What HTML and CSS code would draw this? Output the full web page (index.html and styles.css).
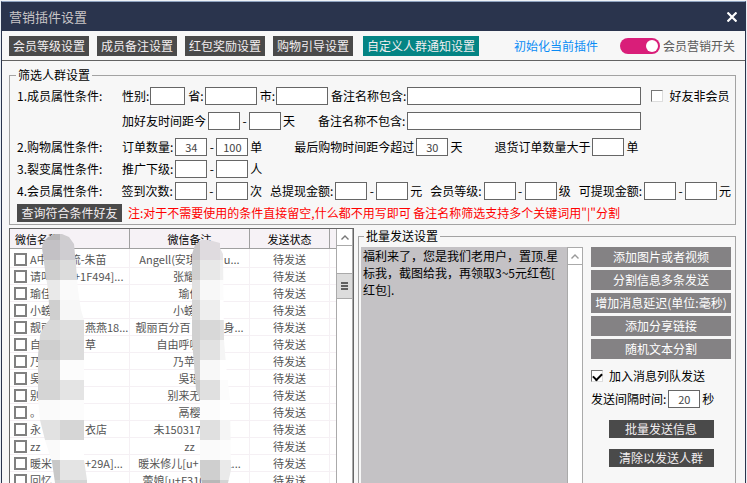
FILE: index.html
```html
<!DOCTYPE html>
<html lang="zh-CN">
<head>
  <meta charset="UTF-8" />
  <meta name="viewport" content="width=device-width, initial-scale=1.0" />
  <title>营销插件设置</title>
  <link rel="stylesheet" href="styles.css">
</head>
<body>
  <div class="window">
    <header class="titlebar">
      <h1>营销插件设置</h1>
      <button class="close" aria-label="关闭">
        <svg width="10" height="10" viewBox="0 0 10 10"><path d="M0.5 0.5L9.5 9.5M9.5 0.5L0.5 9.5" stroke="#fff" stroke-width="2.2"/></svg>
      </button>
    </header>

    <nav class="toolbar">
      <button class="btn tab">会员等级设置</button>
      <button class="btn tab">成员备注设置</button>
      <button class="btn tab">红包奖励设置</button>
      <button class="btn tab">购物引导设置</button>
      <button class="btn tab active">自定义人群通知设置</button>
      <a class="init" href="#">初始化当前插件</a>
      <label class="switch"><input type="checkbox" checked>会员营销开关</label>
    </nav>

    <main>
      <fieldset class="filter">
        <legend>筛选人群设置</legend>
        <div class="member">
          <div class="row tight">
            <span class="row-title">1.成员属性条件:</span>
            <label class="field">性别:<input class="w-s" type="text"></label>
            <label class="field">省:<input class="w-m" type="text"></label>
            <label class="field">市:<input class="w-m" type="text"></label>
            <label class="field">备注名称包含:<input class="w-l" type="text"></label>
            <label class="check"><input type="checkbox">好友非会员</label>
          </div>
          <div class="row wide">
            <span class="row-title"></span>
            <label class="field">加好友时间距今<input type="text"><i>-</i><input type="text" aria-label="天数上限">天</label>
            <label class="field">备注名称不包含:<input class="w-l" type="text"></label>
          </div>
        </div>
        <div class="row wider">
          <span class="row-title">2.购物属性条件:</span>
          <label class="field">订单数量:<input type="text" value="34"><i>-</i><input type="text" value="100" aria-label="订单数量上限">单</label>
          <label class="field">最后购物时间距今超过<input type="text" value="30">天</label>
          <label class="field">退货订单数量大于<input type="text">单</label>
        </div>
        <div class="row">
          <span class="row-title">3.裂变属性条件:</span>
          <label class="field">推广下级:<input type="text"><i>-</i><input type="text" aria-label="下级上限">人</label>
        </div>
        <div class="row">
          <span class="row-title">4.会员属性条件:</span>
          <label class="field">签到次数:<input type="text"><i>-</i><input type="text" aria-label="签到上限">次</label>
          <label class="field">总提现金额:<input type="text"><i>-</i><input type="text" aria-label="总提现上限">元</label>
          <label class="field">会员等级:<input type="text"><i>-</i><input type="text" aria-label="等级上限">级</label>
          <label class="field">可提现金额:<input type="text"><i>-</i><input type="text" aria-label="可提现上限">元</label>
        </div>
        <div class="row">
          <button class="btn small">查询符合条件好友</button>
          <span class="tip">注:对于不需要使用的条件直接留空,什么都不用写即可 备注名称筛选支持多个关键词用"|"分割</span>
        </div>
      </fieldset>

      <div class="panels">
        <section class="list">
          <div class="list-body">
            <table>
              <colgroup><col class="c-name"><col class="c-note"><col class="c-state"><col></colgroup>
              <thead>
                <tr><th>微信名称</th><th>微信备注</th><th>发送状态</th><th></th></tr>
              </thead>
              <tbody id="friends"></tbody>
            </table>
            <svg class="smear first" width="50" height="251" viewBox="38 232 50 251" shape-rendering="crispEdges">
              <clipPath id="a"><path d="M42 248L43 242L48 237L55 234L62 234L69 237L74 244L76 265L78 290L81 310L84 320L84 460L87 480V483H55L52 462L45 440L40 420L38 400V355L40 335L44 326L50 319L48 290L45 270Z"/></clipPath>
              <g id="smear1" clip-path="url(#a)"></g>
            </svg>
            <svg class="smear second" width="42" height="245" viewBox="191 238 42 245" shape-rendering="crispEdges">
              <clipPath id="b"><path d="M192 254L195 245L201 240H209L220 243V248L223 254L224 340L226 365L230 400L231 470L228 483H202L200 475V400L196 390L192 340Z"/></clipPath>
              <g id="smear2" clip-path="url(#b)"></g>
            </svg>
          </div>
          <div class="scroll">
            <button aria-label="向上"><svg width="8" height="5" viewBox="0 0 8 5"><path d="M0.5 4.5L4 1L7.5 4.5" fill="none" stroke="#777" stroke-width="1.4"/></svg></button>
            <span class="thumb"><svg width="7" height="8" viewBox="0 0 7 8"><path d="M0 1H7M0 4H7M0 7H7" stroke="#606060" stroke-width="2"/></svg></span>
          </div>
        </section>

        <fieldset class="send">
          <legend>批量发送设置</legend>
          <div class="message">
            <textarea aria-label="发送内容">福利来了，您是我们老用户，置顶.星
标我，截图给我，再领取3~5元红苞[
红包].</textarea>
            <div class="scroll">
              <button aria-label="向上"><svg width="8" height="5" viewBox="0 0 8 5"><path d="M0.5 4.5L4 1L7.5 4.5" fill="none" stroke="#999" stroke-width="1.4"/></svg></button>
            </div>
          </div>
          <div class="actions">
            <button class="btn gray">添加图片或者视频</button>
            <button class="btn gray">分割信息多条发送</button>
            <button class="btn gray">增加消息延迟(单位:毫秒)</button>
            <button class="btn gray">添加分享链接</button>
            <button class="btn gray">随机文本分割</button>
            <label class="check queue"><input type="checkbox" checked>加入消息列队发送</label>
            <label class="field delay">发送间隔时间:<input type="text" value="20">秒</label>
            <button class="btn small">批量发送信息</button>
            <button class="btn small">清除以发送人群</button>
          </div>
        </fieldset>
      </div>
    </main>
  </div>
  <script src="script.js"></script>
</body>
</html>
```
FILE: styles.css
```css
* {
  box-sizing: border-box;
}
body {
  margin: 0;
  height: 100vh;
  display: flex;
  padding: 0 1px;
  border-top: 1px solid #eef2f6;
  background: #e9eff5;
  overflow: hidden;
  font-family: "Noto Sans CJK SC", sans-serif;
  font-size: 12px;
  line-height: 18px;
  color: #000;
}
button, input, textarea {
  font: inherit;
  margin: 0;
  padding: 0;
  border-radius: 0;
}
.window {
  flex: 1;
  min-width: 0;
  display: flex;
  flex-direction: column;
  border: 1px solid #2a344d;
  border-top-color: #8fa3c0;
  border-bottom: 0;
  background: #f7f7f7;
  overflow: hidden;
}
.titlebar {
  display: flex;
  align-items: center;
  justify-content: space-between;
  height: 29px;
  flex: none;
  padding: 0 8px 0 7px;
  background: #2a344d;
}
.titlebar h1 {
  margin: 0;
  font-size: 13px;
  font-weight: normal;
  color: #c9c5c6;
}
.close {
  display: flex;
  border: 0;
  background: none;
}

/* toolbar */
.toolbar {
  display: flex;
  align-items: center;
  gap: 8px;
  height: 30px;
  flex: none;
  padding: 0 10px 0 7px;
  border-bottom: 1px solid #636363;
  white-space: nowrap;
}
.btn {
  border: 0;
  height: 20px;
  background: #4a4a4a;
  color: #f2eef0;
  white-space: nowrap;
}
.tab {
  padding: 0 4px;
}
.tab.active {
  background: #048484;
  margin-left: 2px;
}
.init {
  color: #0a8cf5;
  text-decoration: none;
  margin-left: auto;
  margin-right: 14px;
}
.switch {
  display: flex;
  align-items: center;
  gap: 3px;
  color: #595959;
}
.switch input {
  appearance: none;
  display: flex;
  width: 40px;
  height: 16px;
  padding: 2px;
  border-radius: 8px;
  background: #d91e79;
}
.switch input::before {
  content: "";
  width: 12px;
  height: 12px;
  margin-left: auto;
  border-radius: 50%;
  background: #fff;
}

main {
  flex: 1;
  min-height: 0;
  display: flex;
  flex-direction: column;
  padding: 6px 9px 0 7px;
}
fieldset {
  margin: 0;
  min-width: 0;
  border: 1px solid #a3a3a3;
}
legend {
  padding: 0 2px;
  line-height: 16px;
}

/* filter rows */
.filter {
  display: flex;
  flex-direction: column;
  gap: 4px;
  padding: 4px 4px 2px 7px;
}
.filter legend {
  margin-left: -1px;
}
.member {
  display: flex;
  flex-direction: column;
  gap: 7px;
  margin-bottom: 4px;
}
.row {
  display: flex;
  align-items: center;
  gap: 8px;
  height: 18px;
  white-space: nowrap;
}
.row-title {
  width: 105px;
  margin-right: -8px;
}
.row.tight {
  gap: 3px;
}
.tight .row-title {
  margin-right: -3px;
}
.row.wide {
  gap: 23px;
}
.wide .row-title {
  margin-right: -23px;
}
.row.wider {
  gap: 32px;
}
.wider .row-title {
  margin-right: -32px;
}
.field {
  display: flex;
  align-items: center;
  gap: 2px;
}
.tight .field {
  gap: 1px;
}
.field i {
  width: 5px;
  font-style: normal;
  text-align: center;
}
.field input {
  width: 32px;
  height: 18px;
  border: 1px solid #666;
  background: #fff;
  color: #444;
  font-size: 11px;
  text-align: center;
}
.field .w-s {
  width: 35px;
}
.field .w-m {
  width: 52px;
}
.field .w-l {
  width: 234px;
}
.check {
  display: flex;
  align-items: center;
  gap: 6px;
}
.row .check {
  margin-left: 7px;
}
.check input {
  appearance: none;
  width: 12px;
  height: 12px;
  border: 1px solid #777;
  border-right-color: #ddd;
  border-bottom-color: #ddd;
  background: #fff;
}
.check input:checked::before {
  content: "";
  display: block;
  width: 7px;
  height: 4px;
  margin: 2px 1px;
  border-left: 2px solid #000;
  border-bottom: 2px solid #000;
  transform: rotate(-45deg);
}
.btn.small {
  width: 105px;
  height: 18px;
}
.row .small {
  margin-right: -2px;
}
.tip {
  color: #f00;
}

/* lower panels */
.panels {
  flex: 1;
  min-height: 0;
  display: grid;
  grid-template-columns: 345px 1fr;
  gap: 4px;
  margin-top: 3px;
  margin-bottom: -2px;
}
.list {
  display: flex;
  min-height: 0;
  border: 1px solid #666;
  background: #fff;
  overflow: hidden;
}
.list-body {
  position: relative;
  flex: 1;
  min-width: 0;
  overflow: hidden;
}
table {
  width: 100%;
  table-layout: fixed;
  border-collapse: separate;
  border-spacing: 0;
  font-size: 11px;
  line-height: 16px;
  color: #555;
}
.c-name, .c-note {
  width: 120px;
}
.c-state {
  width: 80px;
}
th, td {
  padding: 0 5px;
  text-align: center;
  white-space: pre;
  overflow: hidden;
}
th {
  height: 20px;
  font-weight: normal;
  color: #000;
  background: #f6f2f6;
  border-right: 1px solid #a0a0a0;
  border-bottom: 1px solid #a0a0a0;
}
th:last-child, td:last-child {
  padding: 0;
  border-right: 0;
}
td {
  height: 17px;
  border-right: 1px solid #f5f0f4;
  border-bottom: 1px solid #f5f0f4;
}
tbody tr:first-child td {
  padding-top: 2px;
}
th:first-child, td:first-child {
  text-align: left;
}
td:first-child {
  padding-left: 4px;
  padding-right: 0;
}
td label {
  display: flex;
  align-items: center;
  gap: 3px;
}
td input {
  appearance: none;
  flex: none;
  width: 13px;
  height: 13px;
  border: 2px solid #808080;
  background: #fff;
}
.smear {
  position: absolute;
}
.smear.first {
  left: 28px;
  top: 3px;
}
.smear.second {
  left: 181px;
  top: 9px;
}
.scroll {
  flex: none;
  width: 17px;
  border-left: 1px solid #aaa;
  border-right: 1px solid #aaa;
  background: #fff;
}
.scroll button {
  display: flex;
  align-items: center;
  justify-content: center;
  width: 100%;
  height: 17px;
  border: 0;
  border-bottom: 1px solid #aaa;
  background: #fff;
}
.thumb {
  display: flex;
  align-items: center;
  justify-content: center;
  height: 26px;
  margin-top: 27px;
  border: 1px solid #aaa;
  border-width: 1px 0;
  background: #dcdcdc;
}
.send {
  display: flex;
  gap: 8px;
  padding: 3px 4px 0 2px;
}
.send legend {
  margin-left: 3px;
}
.message {
  flex: 1;
  min-width: 0;
  display: flex;
}
.message textarea {
  flex: 1;
  min-width: 0;
  border: 0;
  padding: 0 2px;
  background: #c4c2c5;
  color: #000;
  line-height: 17px;
  resize: none;
  overflow: hidden;
  white-space: pre;
}
.message .scroll {
  width: 16px;
  border-top: 1px solid #aaa;
}
.actions {
  width: 140px;
  display: flex;
  flex-direction: column;
  gap: 3px;
  white-space: nowrap;
}
.btn.gray {
  background: #848284;
  color: #fff;
}
.queue {
  margin-top: 5px;
}
.delay {
  margin: 2px 0 9px;
}
.actions .small {
  align-self: center;
  margin-bottom: 8px;
}
```
FILE: script.js
```js
// [name, note], wide spaces stand for the hidden part
const friends = [
  ["A中　　流-朱苗", "Angell(安琪　　  u..."],
  ["请叫　　+1F494]...", "张耀　"],
  ["瑜佳", "瑜佳"],
  ["小螃", "小螃　"],
  ["靓丽　　　燕燕18...", "靓丽百分百　　　身..."],
  ["自由　　　草", "自由呼吸　　"],
  ["乃", "乃苹　"],
  ["吳", "吳瑶"],
  ["别", "别来无恙"],
  ["。", "鬲樱"],
  ["永　　　　衣店", "未150317　　 "],
  ["zz", "zz"],
  ["暖米　　　+29A]...", "暖米修儿[u+　　  L..."],
  ["回忆", "蕾娘[u+F310　　..."]
];

const tbody = document.getElementById("friends");
friends.forEach(([name, note]) => {
  const tr = document.createElement("tr");
  tr.innerHTML = `<td><label><input type="checkbox">${name}</label></td><td>${note}</td><td>待发送</td><td></td>`;
  tbody.appendChild(tr);
});

// Mosaic blocks, 20px tall, one list of colours per column
function drawSmear(id, xs, top, rows) {
  const g = document.getElementById(id);
  let html = "";
  rows.forEach((colors, r) => {
    colors.split(" ").forEach((c, i) => {
      html += `<rect x="${xs[i]}" y="${top + r * 20}" width="${xs[i + 1] - xs[i]}" height="20" fill="#${c}"/>`;
    });
  });
  g.innerHTML = html;
}

drawSmear("smear1", [36, 60, 90], 220, [
  "b8b6b8 cfcdcf", "c3c1c5 cfcdd1", "cfcfcf dcdcdc", "e9e9e9 fafafa", "cfcfcf f7f7f7",
  "d8d8d8 dedede", "cfcfcf dcdcdc", "d8d8d8 fcfcfc", "d5d5d5 e4e4e4", "fafafa fcfcfc",
  "e2e2e2 d6d6d6", "fafafa ffffff", "c8c8c8 e4e4e4", "d0d0d0 d4d4d4"
]);
drawSmear("smear2", [190, 200, 220, 234], 240, [
  "c8c6c8 dfdbdf e6e4e6", "cfcfcf e8e8e8 f0f0f0", "e0e0e0 f8f8f8 fcfcfc", "d5d5d5 eeeeee ffffff",
  "d0d0d0 d8d8d8 e0e0e0", "d0d0d0 e2e2e2 f5f5f5", "d0d0d0 f8f8f8 ffffff", "c8c8c8 e0e0e0 fcfcfc",
  "ffffff fcfcfc ffffff", "e0e0e0 e0e0e0 f5f5f5", "fafafa fafafa fcfcfc", "d0d0d0 cfcfcf eaeaea", "b8b8b8 b8b8b8 d4d4d4"
]);
```
